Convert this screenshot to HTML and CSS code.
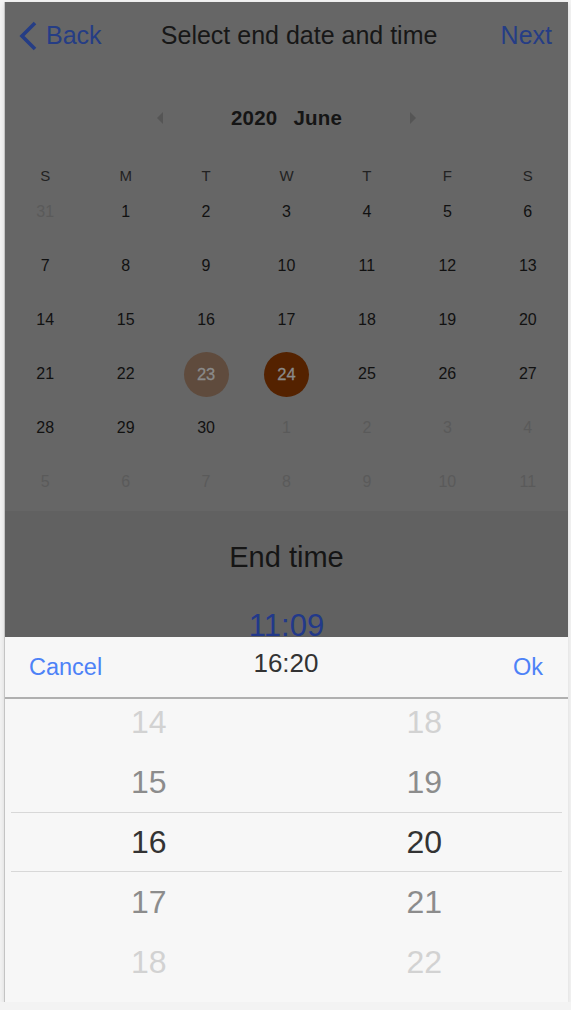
FILE: index.html
```html
<!DOCTYPE html>
<html lang="en">
<head>
<meta charset="utf-8">
<title>Select end date and time</title>
<link rel="stylesheet" href="styles.css">
</head>
<body>
<div class="app">
  <header class="topbar">
    <a class="back">
      <svg class="chev" width="22" height="30" viewBox="0 0 22 30"><path d="M18 2 L5 15 L18 28" fill="none" stroke="currentColor" stroke-width="3.6"/></svg>
      <span>Back</span>
    </a>
    <h1 class="title">Select end date and time</h1>
    <a class="next">Next</a>
  </header>

  <section class="calendar">
    <div class="nav">
      <span class="tri tri-left"></span>
      <div class="ym"><span>2020</span><span>June</span></div>
      <span class="tri tri-right"></span>
    </div>
    <div class="grid weekdays">
      <span>S</span><span>M</span><span>T</span><span>W</span><span>T</span><span>F</span><span>S</span>
    </div>
    <div class="grid days">
      <span class="off">31</span><span>1</span><span>2</span><span>3</span><span>4</span><span>5</span><span>6</span>
      <span>7</span><span>8</span><span>9</span><span>10</span><span>11</span><span>12</span><span>13</span>
      <span>14</span><span>15</span><span>16</span><span>17</span><span>18</span><span>19</span><span>20</span>
      <span>21</span><span>22</span><span><b class="dot start">23</b></span><span><b class="dot end">24</b></span><span>25</span><span>26</span><span>27</span>
      <span>28</span><span>29</span><span>30</span><span class="off">1</span><span class="off">2</span><span class="off">3</span><span class="off">4</span>
      <span class="off">5</span><span class="off">6</span><span class="off">7</span><span class="off">8</span><span class="off">9</span><span class="off">10</span><span class="off">11</span>
    </div>
  </section>

  <section class="endtime">
    <div class="et-label">End time</div>
    <div class="et-value">11:09</div>
  </section>

  <div class="sheet">
    <div class="sheet-head">
      <a class="cancel">Cancel</a>
      <div class="current">16:20</div>
      <a class="ok">Ok</a>
    </div>
    <div class="wheel">
      <div class="wheel-list">
        <div class="row far"><span>14</span><span>18</span></div>
        <div class="row near"><span>15</span><span>19</span></div>
        <div class="row sel"><span>16</span><span>20</span></div>
        <div class="row near"><span>17</span><span>21</span></div>
        <div class="row far"><span>18</span><span>22</span></div>
      </div>
    </div>
  </div>
</div>
</body>
</html>
```

FILE: styles.css
```css
* { box-sizing: border-box; }
html, body { margin: 0; padding: 0; }
body {
  background: #f3f3f3;
  font-family: "Liberation Sans", Arial, sans-serif;
}
.app {
  position: relative;
  width: 564px;
  height: 1000px;
  margin: 2px 0 0 4px;
  border-left: 1px solid #c4c4c4;
  background: #666666;
  overflow: hidden;
  box-shadow: 0 2px 5px rgba(0,0,0,0.10);
}
.topbar {
  height: 66px;
  display: flex;
  align-items: center;
  justify-content: space-between;
  padding: 0 16px 0 12px;
}
.back {
  display: flex;
  align-items: center;
  gap: 7px;
  color: #253d85;
  font-size: 25px;
}
.chev { display: block; margin-top: 1px; }
.title {
  margin: 0 0 0 -4px;
  font-weight: normal;
  font-size: 25px;
  color: #171717;
}
.next { color: #253d85; font-size: 25px; }

.calendar { padding-bottom: 2px; }
.nav {
  margin-top: 30px;
  height: 40px;
  display: flex;
  align-items: center;
  justify-content: center;
  gap: 68px;
}
.ym {
  display: flex;
  gap: 16px;
  font-weight: bold;
  font-size: 20.5px;
  color: #151515;
  letter-spacing: 0.2px;
}
.tri { width: 0; height: 0; border-top: 6px solid transparent; border-bottom: 6px solid transparent; }
.tri-left { border-right: 6px solid #555; }
.tri-right { border-left: 6px solid #555; }

.grid {
  display: grid;
  grid-template-columns: repeat(7, 1fr);
}
.weekdays {
  margin-top: 28px;
  height: 18px;
  align-items: center;
  font-size: 15px;
  color: #222;
}
.days { margin-top: 1px; }
.weekdays span, .days span {
  display: flex;
  align-items: center;
  justify-content: center;
}
.days span {
  height: 54px;
  font-size: 16px;
  color: #111;
}
.days span.off { color: #5a5a5a; }
.dot {
  width: 45px;
  height: 45px;
  border-radius: 50%;
  display: flex;
  align-items: center;
  justify-content: center;
  font-weight: normal;
  font-size: 16.5px;
  color: #8a8a8a;
  -webkit-text-stroke: 0.3px #8a8a8a;
}
.dot.start { background: #5f4b3d; }
.dot.end { background: #542200; }

.endtime {
  background: #616161;
  height: 200px;
  padding-top: 29px;
  text-align: center;
}
.et-label {
  font-size: 29px;
  line-height: 34px;
  color: #151515;
}
.et-value {
  margin-top: 34px;
  font-size: 31px;
  line-height: 36px;
  color: #22398a;
}

.sheet {
  position: absolute;
  left: 0;
  right: 0;
  bottom: 0;
  height: 365px;
  background: #f7f7f7;
}
.sheet-head {
  height: 62px;
  border-bottom: 2px solid #b0b0b0;
  display: grid;
  grid-template-columns: 1fr auto 1fr;
  align-items: center;
  padding: 0 25px 0 24px;
}
.cancel, .ok {
  color: #4d82f7;
  font-size: 23.5px;
}
.ok { justify-self: end; }
.current {
  font-size: 26px;
  color: #333;
  margin-bottom: 8px;
}
.wheel {
  height: 303px;
  overflow: hidden;
  padding: 0 6px;
}
.wheel-list { margin-top: -7px; }
.row {
  height: 60px;
  display: grid;
  grid-template-columns: 1fr 1fr;
  align-items: center;
  justify-items: center;
  font-size: 32px;
}
.row.far { color: #d2d2d2; }
.row.near { color: #8c8c8c; }
.row.sel {
  color: #333;
  border-top: 1px solid #d8d8d8;
  border-bottom: 1px solid #d8d8d8;
}
```
